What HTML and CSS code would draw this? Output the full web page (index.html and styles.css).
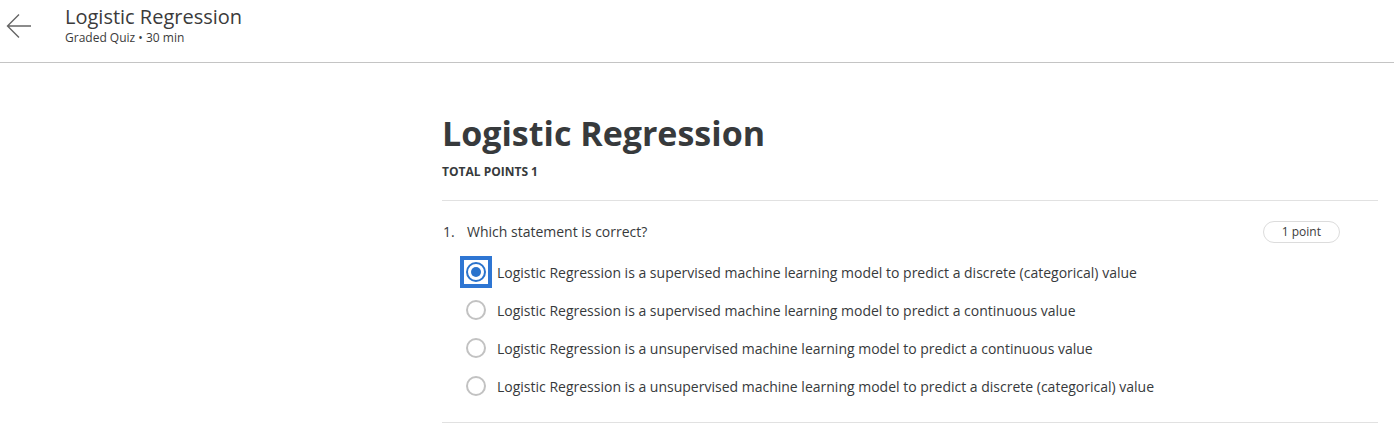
FILE: index.html
```html
<!DOCTYPE html>
<html>
<head>
<meta charset="utf-8">
<link rel="stylesheet" href="styles.css">
</head>
<body>
<header class="topbar">
  <button class="back" aria-label="Back">
    <svg width="26" height="26" viewBox="0 0 26 26"><path d="M25 13H2M13 1.5L1.5 13L13 24.5" fill="none" stroke="#666" stroke-width="1.4"/></svg>
  </button>
  <div class="titles">
    <div class="top-title">Logistic Regression</div>
    <div class="top-sub">Graded Quiz • 30 min</div>
  </div>
</header>
<main class="content">
  <h1 class="quiz-title">Logistic Regression</h1>
  <div class="total">TOTAL POINTS 1</div>
  <section class="question">
    <div class="q-head">
      <span class="q-num">1.</span>
      <span class="q-text">Which statement is correct?</span>
      <span class="pill">1 point</span>
    </div>
    <ul class="options">
      <li class="option"><span class="focus"><span class="radio checked"></span></span><span>Logistic Regression is a supervised machine learning model to predict a discrete (categorical) value</span></li>
      <li class="option"><span class="focus none"><span class="radio"></span></span><span>Logistic Regression is a supervised machine learning model to predict a continuous value</span></li>
      <li class="option"><span class="focus none"><span class="radio"></span></span><span>Logistic Regression is a unsupervised machine learning model to predict a continuous value</span></li>
      <li class="option"><span class="focus none"><span class="radio"></span></span><span>Logistic Regression is a unsupervised machine learning model to predict a discrete (categorical) value</span></li>
    </ul>
  </section>
</main>
</body>
</html>
```
FILE: styles.css
```css
* { box-sizing: border-box; }
body {
  margin: 0;
  font-family: "Open Sans", "Noto Sans", sans-serif;
  color: #373a3c;
  background: #fff;
}
.topbar {
  height: 63px;
  border-bottom: 1px solid #c4c4c4;
  display: flex;
  align-items: flex-start;
}
.back {
  border: 0;
  background: none;
  padding: 0;
  margin: 13px 0 0 6px;
  width: 26px;
  height: 26px;
  display: flex;
}
.titles {
  margin-left: 33px;
  padding-top: 4px;
}
.top-title {
  font-size: 20px;
  line-height: 26px;
  color: #3b3b3b;
}
.top-sub {
  font-size: 12px;
  line-height: 16px;
  color: #3b3b3b;
}
.content {
  margin: 0 16px 0 442px;
  padding-top: 46px;
}
.quiz-title {
  margin: 0;
  font-size: 34px;
  font-weight: 700;
  line-height: 48px;
  color: #373a3c;
}
.total {
  margin-top: 7px;
  font-size: 12px;
  font-weight: 700;
  line-height: 16px;
}
.question {
  margin-top: 20px;
  border-top: 1px solid #e1e1e1;
  border-bottom: 1px solid #e1e1e1;
  padding: 20px 0 17px;
}
.q-head {
  display: flex;
  align-items: center;
  font-size: 14px;
  line-height: 22px;
  padding-right: 38px;
}
.q-num { width: 25px; padding-left: 1px; }
.q-text { flex: 1; }
.pill {
  border: 1px solid #dcdcdc;
  border-radius: 12px;
  font-size: 12px;
  line-height: 20px;
  padding: 0 18px;
  color: #3b3b3b;
}
.options {
  list-style: none;
  margin: 10px 0 0;
  padding: 0 0 0 18px;
}
.option {
  display: flex;
  align-items: center;
  height: 38px;
  font-size: 14px;
  color: #373a3c;
}
.focus {
  width: 32px;
  height: 32px;
  border: 4px solid #2e76d3;
  display: flex;
  align-items: center;
  justify-content: center;
  margin-right: 5px;
}
.focus.none { border-color: transparent; }
.radio {
  width: 20px;
  height: 20px;
  border-radius: 50%;
  border: 2px solid #c2c2c2;
  display: block;
  position: relative;
}
.radio.checked {
  border-color: #2a73cc;
}
.radio.checked::after {
  content: "";
  position: absolute;
  left: 3px;
  top: 3px;
  width: 10px;
  height: 10px;
  border-radius: 50%;
  background: #2a73cc;
}
```
